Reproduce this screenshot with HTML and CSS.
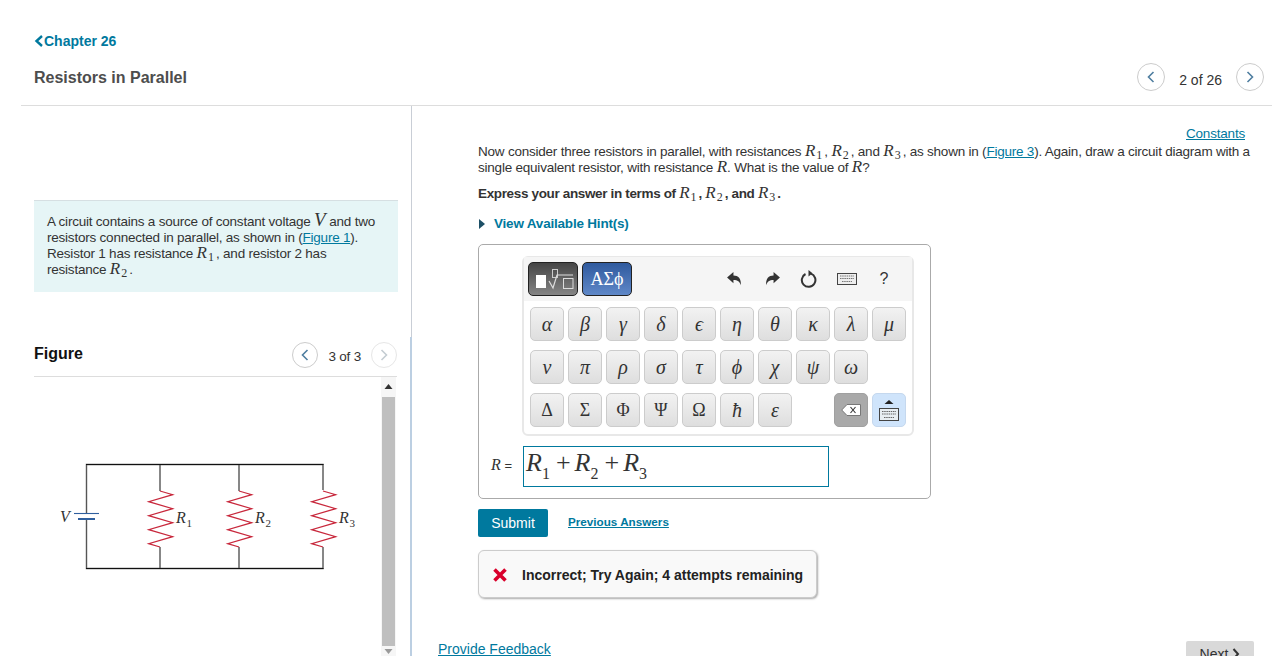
FILE: index.html
```html
<!DOCTYPE html>
<html lang="en">
<head>
<meta charset="utf-8">
<title>Resistors in Parallel</title>
<link rel="stylesheet" href="styles.css">
</head>
<body>
<div class="page">
  <header class="top">
    <a class="chapter" href="#"><svg class="chev" width="10" height="12" viewBox="0 0 10 12"><path d="M8 1 2.500 6 8 11" fill="none" stroke="#00799e" stroke-width="2.400"/></svg>Chapter 26</a>
    <div class="title-row">
      <h1 class="title">Resistors in Parallel</h1>
      <nav class="pager">
        <span class="circle"><svg width="12" height="14" viewBox="0 0 12 14"><path d="M8.500 2 3.500 7l5 5" fill="none" stroke="#4f7ea0" stroke-width="1.600"/></svg></span>
        <span class="pager-text">2 of 26</span>
        <span class="circle"><svg width="12" height="14" viewBox="0 0 12 14"><path d="M3.500 2l5 5-5 5" fill="none" stroke="#4f7ea0" stroke-width="1.600"/></svg></span>
      </nav>
    </div>
  </header>
  <div class="content">
    <aside class="left">
      <div class="intro">A circuit contains a source of constant voltage <span class="m big">V</span> and two resistors connected in parallel, as shown in (<a href="#">Figure 1</a>). Resistor 1 has resistance <span class="m">R<sub>1</sub></span>, and resistor 2 has resistance <span class="m">R<sub>2</sub></span>.</div>
      <div class="fig-head">
        <h2 class="fig-title">Figure</h2>
        <div class="fig-nav">
          <span class="circle small"><svg width="12" height="14" viewBox="0 0 12 14"><path d="M8.500 2 3.500 7l5 5" fill="none" stroke="#4f7ea0" stroke-width="1.600"/></svg></span>
          <span class="fig-count">3 of 3</span>
          <span class="circle small faded"><svg width="12" height="14" viewBox="0 0 12 14"><path d="M3.500 2l5 5-5 5" fill="none" stroke="#c4ccd2" stroke-width="1.600"/></svg></span>
        </div>
      </div>
      <div class="fig-body">
        <svg class="circuit" width="347" height="280" viewBox="34 377 347 280">
          <path d="M86.500 513V464.500H323V490M160 464.500V491M239 464.500V491M86.500 519V568.500H323V547M160 568.500V547M239 568.500V547" fill="none" stroke="#555" stroke-width="1.400"/>
          <path d="M86 464.500H323.500M86 568.500H323.500" stroke="#111" stroke-width="1.200"/>
          <path d="M74 513.500H99" stroke="#2f5f9e" stroke-width="1.100"/>
          <path d="M78 519H95" stroke="#2f5f9e" stroke-width="2"/>
          <g fill="none" stroke="#c8283c" stroke-width="1.200">
            <path d="M160 491l12.700 3.700-24 7 24 7-24 7 24 7-24 7 24 7-24 7 11.300 3.300"/>
            <path d="M239 491l12.700 3.700-24 7 24 7-24 7 24 7-24 7 24 7-24 7 11.300 3.300"/>
            <path d="M323 491l12.700 3.700-24 7 24 7-24 7 24 7-24 7 24 7-24 7 11.300 3.300"/>
          </g>
          <text class="ct" x="60" y="522">V</text>
          <text class="ct" x="176" y="523">R</text><text class="cs" x="186.500" y="527">1</text>
          <text class="ct" x="255" y="523">R</text><text class="cs" x="265.500" y="527">2</text>
          <text class="ct" x="339" y="523">R</text><text class="cs" x="349.500" y="527">3</text>
        </svg>
        <div class="scrollbar">
          <svg width="15" height="20" viewBox="0 0 15 20"><path d="M3.500 12 7.500 7l4 5z" fill="#333"/></svg>
          <div class="thumb"></div>
          <svg width="15" height="10" viewBox="0 0 15 10"><path d="M3.500 3l4 5 4-5z" fill="#9a9a9a"/></svg>
        </div>
      </div>
    </aside>
    <main class="right">
      <div class="constants"><a href="#">Constants</a></div>
      <p class="q">Now consider three resistors in parallel, with resistances <span class="m">R<sub>1</sub></span>, <span class="m">R<sub>2</sub></span>, and <span class="m">R<sub>3</sub></span>, as shown in (<a href="#">Figure 3</a>). Again, draw a circuit diagram with a single equivalent resistor, with resistance <span class="m">R</span>. What is the value of <span class="m">R</span>?</p>
      <p class="express">Express your answer in terms of <span class="m">R<sub>1</sub></span>, <span class="m">R<sub>2</sub></span>, and <span class="m">R<sub>3</sub></span>.</p>
      <div class="hints"><svg width="8" height="10" viewBox="0 0 8 10"><path d="M1 0l6 5-6 5z" fill="#1d4f66"/></svg>View Available Hint(s)</div>
      <section class="card">
        <div class="palette">
          <div class="toolbar">
            <span class="mode dark"><svg width="48" height="32" viewBox="0 0 48 32"><rect x="7" y="12" width="10" height="13" fill="#fff"/><rect x="23.500" y="6.500" width="5" height="8" fill="none" stroke="#ccc"/><path d="M20 18l4 7 4-13h16" fill="none" stroke="#ddd" stroke-width="1.200"/><rect x="34.500" y="15.500" width="9.500" height="10" fill="none" stroke="#ddd"/></svg></span>
            <span class="mode blue">ΑΣϕ</span>
            <div class="tools">
              <span class="tool"><svg width="17" height="17" viewBox="0 0 16 16"><path d="M1 6 7 1v3.200c4.500 0 7.500 2.800 7 9.300-1-3.500-3-5-7-5V11.500z" fill="#333"/></svg></span>
              <span class="tool"><svg width="17" height="17" viewBox="0 0 16 16"><path d="M15 6 9 1v3.200c-4.500 0-7.500 2.800-7 9.300 1-3.500 3-5 7-5v3z" fill="#333"/></svg></span>
              <span class="tool"><svg width="18" height="18" viewBox="0 0 18 18"><path d="M10.800 3.600A6.800 6.800 0 1 1 5.500 4" fill="none" stroke="#333" stroke-width="2"/><path d="M8.500 0v6.500l4-3.200z" fill="#333"/></svg></span>
              <span class="tool"><svg width="20" height="12" viewBox="0 0 20 12"><rect x=".5" y=".5" width="19" height="11" fill="#eee" stroke="#444"/><path d="M3 3h14M3 5.500h14M5 8.500h10" stroke="#777" stroke-width="1.200" stroke-dasharray="1.500 .7"/></svg></span>
              <span class="tool help">?</span>
            </div>
          </div>
          <div class="keys">
            <span class="key">α</span><span class="key">β</span><span class="key">γ</span><span class="key">δ</span><span class="key">ϵ</span><span class="key">η</span><span class="key">θ</span><span class="key">κ</span><span class="key">λ</span><span class="key">μ</span>
            <span class="key">ν</span><span class="key">π</span><span class="key">ρ</span><span class="key">σ</span><span class="key">τ</span><span class="key">ϕ</span><span class="key">χ</span><span class="key">ψ</span><span class="key">ω</span>
            <span class="key up first">Δ</span><span class="key up">Σ</span><span class="key up">Φ</span><span class="key up">Ψ</span><span class="key up">Ω</span><span class="key">ħ</span><span class="key">ε</span>
            <span class="key back"><svg width="20" height="12" viewBox="0 0 20 12"><path d="M6 .5H19.500V11.500H6L.7 6z" fill="#fff" stroke="#777"/><path d="M9.500 3l5 6m0-6-5 6" stroke="#333" stroke-width="1.100"/></svg></span>
            <span class="key kbd"><svg width="20" height="22" viewBox="0 0 20 22"><path d="M10 1l4.500 4h-9z" fill="#222"/><rect x=".5" y="9.500" width="19" height="12" fill="#e8eef2" stroke="#444"/><path d="M3 12.500h14M3 15h14M5 18.500h10" stroke="#666" stroke-width="1.200" stroke-dasharray="1.500 .7"/></svg></span>
          </div>
        </div>
        <div class="answer">
          <span class="r-label"><i>R</i> =</span>
          <div class="input"><i>R</i><sub>1</sub><span class="plus">+</span><i>R</i><sub>2</sub><span class="plus">+</span><i>R</i><sub>3</sub></div>
        </div>
      </section>
      <div class="actions">
        <button class="submit" type="button">Submit</button>
        <a class="prev" href="#">Previous Answers</a>
      </div>
      <div class="feedback">
        <svg width="14" height="14" viewBox="0 0 14 14"><path d="M1.500 1.500l11 11m0-11-11 11" stroke="#d9002b" stroke-width="3.600"/></svg>
        <span>Incorrect; Try Again; 4 attempts remaining</span>
      </div>
      <div class="foot">
        <a href="#">Provide Feedback</a>
        <span class="next">Next<svg width="8" height="12" viewBox="0 0 8 12"><path d="M1.500 1l4.500 5-4.500 5" fill="none" stroke="#333" stroke-width="2"/></svg></span>
      </div>
    </main>
  </div>
</div>
</body>
</html>
```
FILE: styles.css
```css
* { box-sizing: border-box; }
html, body { margin: 0; padding: 0; }
body { font: 14px/16px "Liberation Sans", Arial, sans-serif; color: #333; background: #fff; overflow: hidden; }
.page { width: 1272px; height: 656px; overflow: hidden; }
a { color: #00799e; }
h1, h2, p { margin: 0; }

.top { margin-left: 21px; padding: 33px 8px 0 13px; height: 106px; border-bottom: 1px solid #ddd; }
.chapter { display: flex; align-items: center; font-weight: 700; text-decoration: none; height: 16px; }
.title-row { display: flex; justify-content: space-between; align-items: center; margin-top: 14px; height: 28px; }
.title { font-size: 16px; font-weight: 700; color: #4d4d4d; padding-top: 2px; }
.pager { display: flex; align-items: center; gap: 14px; }
.pager-text { padding-top: 5px; }
.circle { width: 28px; height: 28px; border: 1px solid #ccc; border-radius: 50%; display: flex; align-items: center; justify-content: center; }
.circle.small { width: 26px; height: 26px; }
.circle.faded { border-color: #e6e6e6; }

.content { display: flex; height: 550px; position: relative; }
.content::after { content: ""; position: absolute; left: 410px; top: 231px; bottom: 0; width: 2px; background: #bccfe2; }
.left { width: 412px; flex: none; padding-left: 34px; border-right: 1px solid #c9ced6; overflow: hidden; }
.intro { margin-top: 94px; width: 364px; height: 92px; padding: 13px 18px 0 13px; background: #e6f5f6; border-top: 1px solid #d6dfe2; font-size: 13.5px; letter-spacing: -0.22px; }
.m { font-family: "Liberation Serif", serif; font-style: italic; font-size: 17px; line-height: 0; letter-spacing: 0; }
.m.big { font-size: 19px; }
sub { font-size: 12px; line-height: 0; font-style: normal; vertical-align: -3px; margin: 0 2px 0 1px; }
.fig-head { display: flex; justify-content: space-between; margin-top: 50px; width: 363px; height: 35px; border-bottom: 1px solid #ddd; }
.fig-title { font-size: 16px; line-height: 24px; font-weight: 700; color: #111; }
.fig-nav { display: flex; align-items: flex-start; gap: 10px; }
.fig-count { padding-top: 7px; font-size: 13.5px; letter-spacing: -0.2px; }
.fig-body { display: flex; height: 280px; width: 363px; }
.circuit { display: block; flex: none; }
.ct { font: italic 16px "Liberation Serif", serif; fill: #333; }
.cs { font: 11px "Liberation Serif", serif; fill: #333; }
.scrollbar { width: 15px; height: 280px; display: flex; flex-direction: column; align-items: center; background: #f6f6f6; }
.thumb { width: 13px; height: 249px; background: #bfbfbf; flex: none; }

.right { flex: 1; padding-left: 66px; padding-right: 18px; overflow: hidden; }
.constants { text-align: right; margin-top: 20px; padding-right: 9px; font-size: 13.5px; letter-spacing: -0.2px; }
.q { margin: 2px 0 0; font-size: 13.5px; letter-spacing: -0.22px; }
.express { margin-top: 10px; font-weight: 700; font-size: 13.5px; letter-spacing: -0.35px; }
.express .m { font-weight: 400; }
.hints { margin-top: 14px; font-weight: 700; color: #00799e; display: flex; align-items: center; gap: 8px; font-size: 13.5px; letter-spacing: -0.2px; }

.card { margin-top: 12px; width: 453px; height: 255px; border: 1px solid #aaa; border-radius: 5px; padding: 11px 12px; }
.palette { margin-left: 31px; width: 392px; height: 180px; border: 2px solid #e8e8e8; border-top-width: 1px; border-radius: 6px; }
.toolbar { display: flex; align-items: flex-start; gap: 4px; height: 44px; padding: 5px 0 0 4px; background: #f5f5f5; }
.mode { width: 50px; height: 34px; border-radius: 5px; border: 1px solid #222; display: flex; align-items: center; justify-content: center; color: #fff; }
.mode.dark { background: linear-gradient(#454545, #858585); }
.mode.blue { background: linear-gradient(#2f5a9e, #5f88c8); font: 18px "Liberation Serif", serif; }
.tools { display: flex; margin-left: auto; padding-right: 9.5px; height: 34px; }
.tool { width: 37.25px; display: flex; align-items: center; justify-content: center; }
.help { font-size: 16px; color: #333; }
.keys { display: grid; grid-template-columns: repeat(10, 34px); grid-auto-rows: 34px; gap: 9px 4px; padding: 6px 0 0 6px; }
.key { display: flex; align-items: center; justify-content: center; border: 1px solid #ccc; border-radius: 5px; background: linear-gradient(#f2f2f2, #dedede); font: italic 20px "Liberation Serif", serif; color: #333; }
.key.up { font-style: normal; font-size: 18px; }
.key.first { grid-column: 1; }
.key.back { grid-column: 9; background: #a9a9a9; border-color: #a0a0a0; }
.key.kbd { grid-column: 10; background: #cfe4fb; border-color: #c5d8ee; }

.answer { display: flex; align-items: center; margin-top: 10px; }
.r-label { width: 32px; font-size: 13px; padding-bottom: 2px; }
.r-label i { font-family: "Liberation Serif", serif; font-size: 16px; }
.input { width: 306px; height: 41px; border: 1px solid #00799e; padding-left: 2px; font: 26px/32px "Liberation Serif", serif; color: #333; white-space: nowrap; }
.input sub { font-size: 16px; line-height: 0; vertical-align: -8px; margin: 0; }
.plus { margin: 0 4px 0 6px; }

.actions { display: flex; align-items: center; gap: 20px; margin-top: 10px; height: 28px; }
.submit { width: 70px; height: 28px; border: 0; border-radius: 2px; background: #00799e; color: #fff; font: 14px "Liberation Sans", sans-serif; padding: 0; }
.prev { font-size: 11.7px; font-weight: 700; position: relative; top: -1px; }
.feedback { display: flex; align-items: center; gap: 15px; margin-top: 13px; width: 339px; height: 48px; padding: 1px 0 0 14px; background: #f9f9f9; border: 1px solid #ccc; border-radius: 6px; box-shadow: 1px 1px 2px #aaa; font-weight: 700; color: #222; }
.foot { display: flex; justify-content: space-between; align-items: flex-start; margin: 43px 0 0 -40px; }
.next { display: flex; gap: 4px; justify-content: center; align-items: flex-start; width: 68px; height: 28px; background: #d9d9d9; border-radius: 2px; padding-top: 5px; }
.next svg { margin-top: 2px; }
```
